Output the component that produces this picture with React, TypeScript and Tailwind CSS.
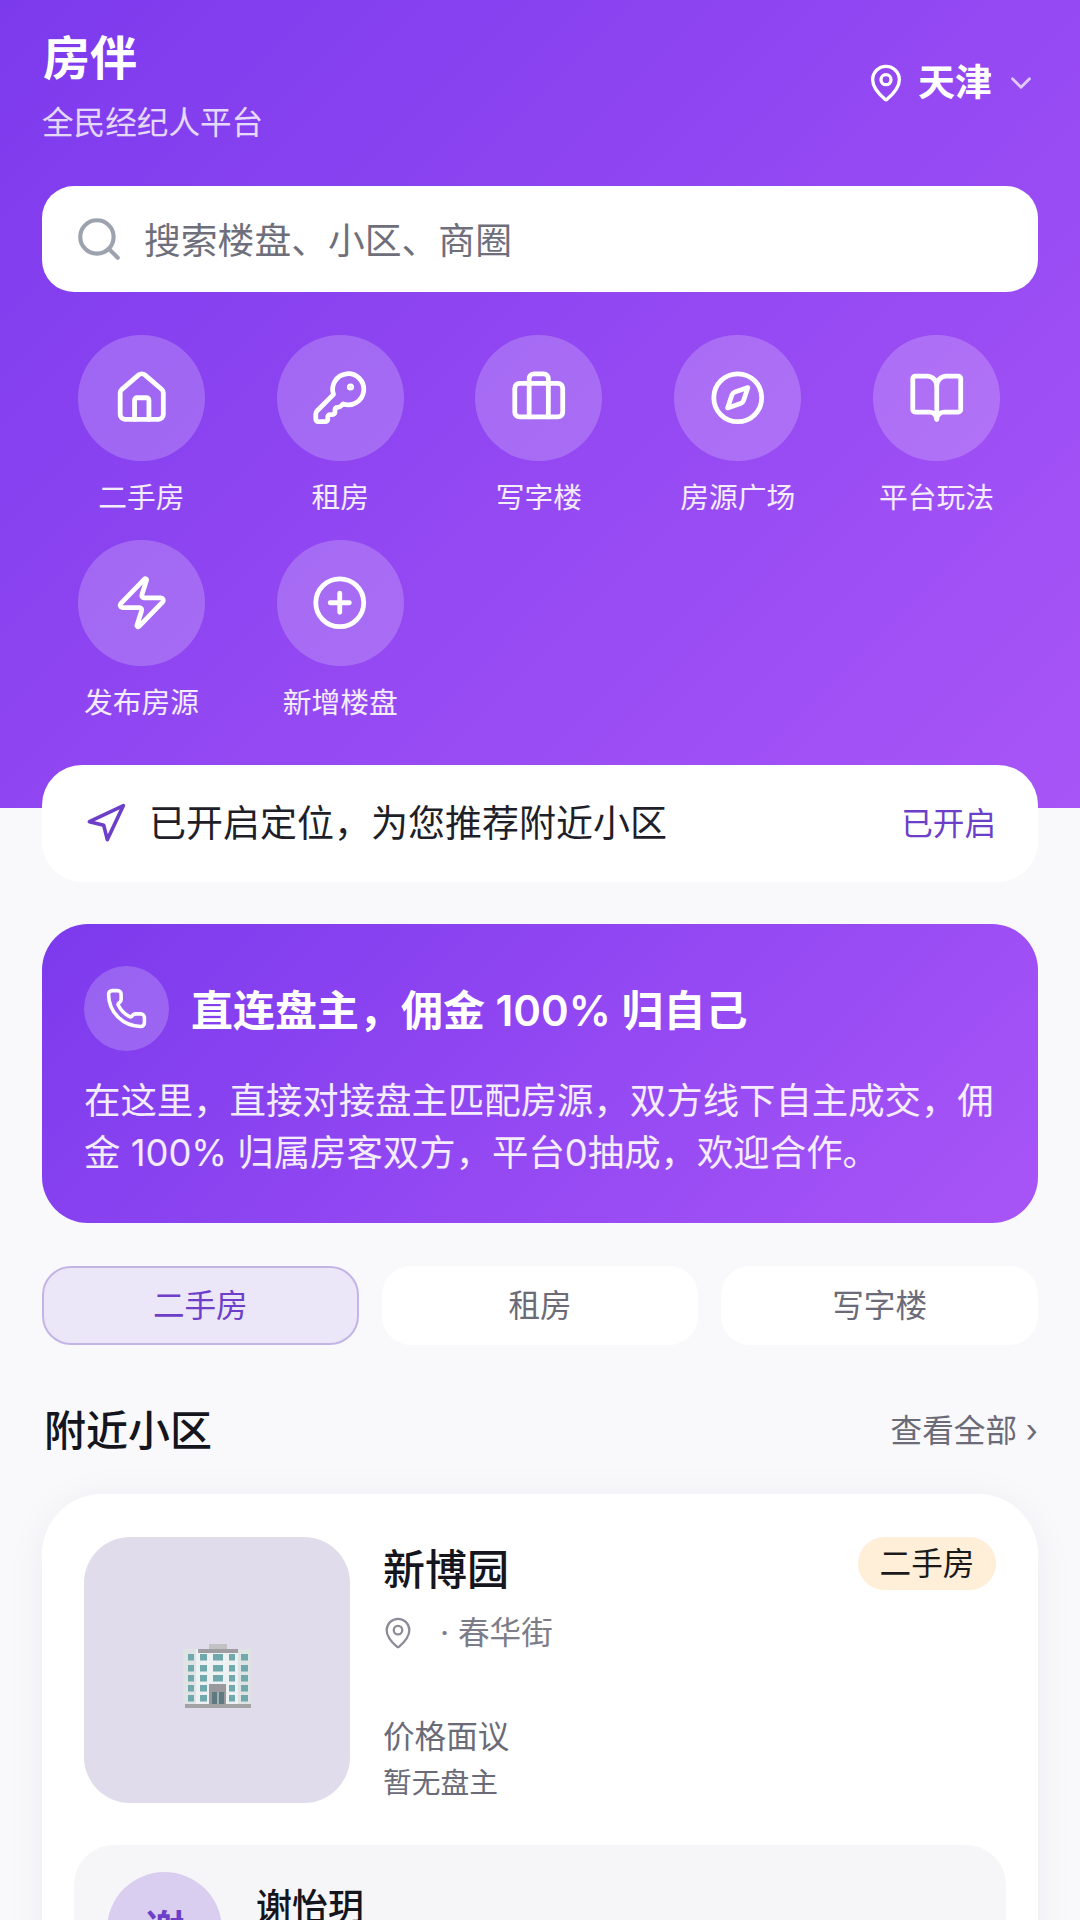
import { BookOpen, Briefcase, ChevronDown, CirclePlus, Compass, House, KeyRound, MapPin, Navigation, Phone, Search, Zap } from "lucide-react";

const shortcuts = [
  { label: "二手房", icon: House },
  { label: "租房", icon: KeyRound },
  { label: "写字楼", icon: Briefcase },
  { label: "房源广场", icon: Compass },
  { label: "平台玩法", icon: BookOpen },
  { label: "发布房源", icon: Zap },
  { label: "新增楼盘", icon: CirclePlus },
];

// windows of the placeholder building: [x, width] per column, y per floor
const floors = [10, 21, 31, 41, 51];
const windowCols = [
  [5, 6],
  [17, 7],
  [30, 10],
  [46, 6],
  [58, 7],
];

function Building() {
  return (
    <svg width="68" height="64" viewBox="0 0 68 64" className="mt-[12px]">
      <rect x="26" y="0" width="18" height="6" fill="#c2c2c4" />
      <rect x="0" y="5" width="68" height="55" fill="#dfe3e3" />
      <rect x="13" y="5" width="42" height="55" fill="#eef1f1" />
      <rect x="15" y="5" width="40" height="4" fill="#9e9ea2" />
      {floors.map((y) =>
        windowCols.map(([x, w]) => <rect key={`${x}-${y}`} x={x} y={y} width={w} height="6.5" fill="#6fa8ad" />),
      )}
      <rect x="26" y="40" width="17" height="20" fill="#9a9a9e" />
      <rect x="29" y="48" width="12" height="12" fill="#5d7a80" />
      <rect x="34.5" y="48" width="1" height="12" fill="#e3e7e7" />
      <rect x="2" y="60" width="66" height="4" fill="#a3a3a6" />
    </svg>
  );
}

export default function App() {
  return (
    <div className="h-[1920px] overflow-hidden bg-[#f9f9fc] font-[family-name:Inter,'Noto_Sans_CJK_SC',sans-serif]">
      <header className="h-[808px] bg-linear-[135deg] from-[#7c3aed] to-[#a855f7] px-[42px] pt-[35px] text-white">
        <div className="flex items-start justify-between">
          <div>
            <h1 className="ml-[1px] text-[47px] leading-[46px] font-semibold">房伴</h1>
            <p className="mt-[22px] text-[31.6px] leading-[40px] text-white/80">全民经纪人平台</p>
          </div>
          <div className="mt-[25px] flex items-center">
            <MapPin size={40} />
            <span className="ml-[12px] text-[37px] leading-[46px] font-semibold">天津</span>
            <ChevronDown size={34} className="ml-[12px] text-white/70" />
          </div>
        </div>

        <div className="mt-[43px] flex h-[106px] items-center rounded-[32px] bg-white pl-[32px]">
          <Search size={50} className="text-[#9ca3af]" />
          <span className="ml-[20px] pt-[3px] text-[36.8px] text-[#6f6f7c]">搜索楼盘、小区、商圈</span>
        </div>

        <div className="mt-[43px] mr-[2px] grid grid-cols-5 gap-y-[22px]">
          {shortcuts.map(({ label, icon: Icon }) => (
            <div key={label} className="flex h-[183px] flex-col items-center">
              <div className="flex h-[127px] w-[127px] items-center justify-center rounded-full bg-white/20">
                <Icon size={57.5} />
              </div>
              <span className="mt-[17px] text-[28.75px] leading-[40px] text-white/90">{label}</span>
            </div>
          ))}
        </div>
      </header>

      <main className="px-[42px]">
        <div className="relative -mt-[43px] flex h-[117px] items-center justify-between rounded-[40px] bg-white px-[42px]">
          <div className="flex items-center">
            <Navigation size={43} className="text-[#6d3fc8]" />
            <span className="ml-[22px] text-[37px] text-[#1f1f29]">已开启定位，为您推荐附近小区</span>
          </div>
          <span className="text-[31.6px] text-[#6d3fc8]">已开启</span>
        </div>

        <section className="mt-[42px] h-[299px] rounded-[46px] bg-linear-[135deg] from-[#7c3aed] to-[#a855f7] p-[42px] text-white">
          <div className="flex items-center">
            <div className="flex h-[85px] w-[85px] items-center justify-center rounded-full bg-white/20">
              <Phone size={43} />
            </div>
            <h2 className="ml-[22px] pt-[3px] text-[42px] font-semibold">直连盘主，佣金 100% 归自己</h2>
          </div>
          <p className="mt-[24px] text-[36.4px] leading-[52px] text-white/90">
            在这里，直接对接盘主匹配房源，双方线下自主成交，佣金 100% 归属房客双方，平台0抽成，欢迎合作。
          </p>
        </section>

        <div className="mt-[43px] grid grid-cols-3 gap-[23px]">
          <button className="h-[79px] rounded-[29px] border-[2.5px] border-[#c2b5e6] bg-[#ece7f8] text-[31.6px] text-[#6d3fc8]">二手房</button>
          <button className="h-[79px] rounded-[29px] bg-white text-[31.6px] text-[#6b6b78]">租房</button>
          <button className="h-[79px] rounded-[29px] bg-white text-[31.6px] text-[#6b6b78]">写字楼</button>
        </div>

        <div className="mt-[58px] flex items-center justify-between">
          <h2 className="ml-[2px] text-[42px] leading-[56px] font-medium text-[#15151d]">附近小区</h2>
          <span className="text-[31.6px] leading-[56px] text-[#6b6b78]">查看全部 ›</span>
        </div>

        <article className="mt-[35px] rounded-[60px] bg-white px-[32px] pt-[43px] shadow-[0_4px_40px_rgba(30,20,60,0.05)]">
          <div className="flex px-[10px]">
            <div className="flex h-[266px] w-[266px] shrink-0 items-center justify-center rounded-[46px] bg-[#e0dcec]">
              <Building />
            </div>
            <div className="ml-[33px] flex min-w-0 flex-1 flex-col">
              <div className="flex items-start justify-between">
                <h3 className="mt-[5px] text-[42px] leading-[56px] font-medium text-[#15151d]">新博园</h3>
                <span className="flex h-[53px] w-[138px] items-center justify-center rounded-full bg-[#ffeed8] text-[31.6px] text-[#1a1a1a]">二手房</span>
              </div>
              <div className="mt-[15px] flex items-center text-[31.6px] leading-[40px] text-[#7d7d8a]">
                <MapPin size={34} strokeWidth={1.6} className="-ml-[2px] text-[#8b8b99]" />
                <span className="ml-[25px]">· 春华街</span>
              </div>
              <div className="mt-auto pb-[2px]">
                <p className="text-[31.6px] leading-[40px] text-[#6b6b78]">价格面议</p>
                <p className="mt-[8px] text-[28.75px] leading-[36px] text-[#6b6b78]">暂无盘主</p>
              </div>
            </div>
          </div>

          <div className="mt-[42px] flex rounded-[40px] bg-[#f6f6f8] px-[33px] pt-[27px] pb-[27px]">
            <div className="flex h-[115px] w-[115px] shrink-0 items-center justify-center rounded-full bg-[#d9cdf0] text-[40px] font-semibold text-[#6d3fc8]">谢</div>
            <div className="ml-[34px] pt-[11px]">
              <p className="text-[36px] leading-[48px] font-medium text-[#15151d]">谢怡玥</p>
            </div>
          </div>
        </article>
      </main>
    </div>
  );
}
